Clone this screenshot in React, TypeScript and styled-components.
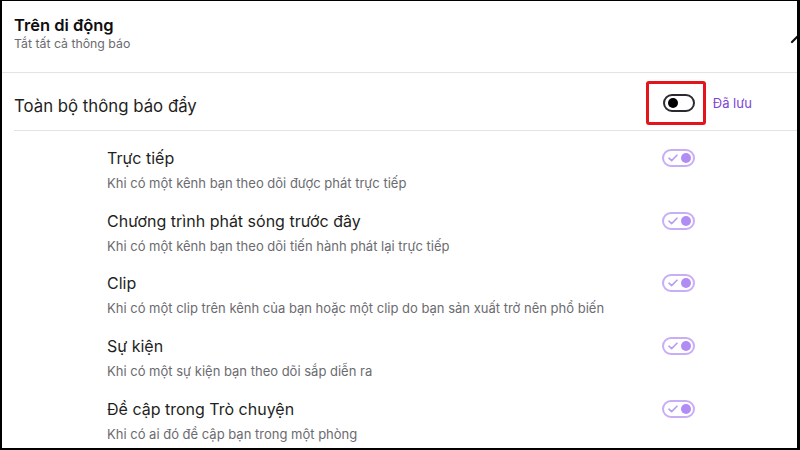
import styled, { createGlobalStyle } from "styled-components";

const GlobalStyle = createGlobalStyle`
  html, body {
    margin: 0;
    padding: 0;
    background: #ffffff;
  }
  body {
    font-family: Inter, "Noto Sans", "Liberation Sans", sans-serif;
    color: #1f1f23;
  }
`;

const Frame = styled.div`
  width: 800px;
  height: 450px;
  box-sizing: border-box;
  border: 2px solid #000;
  border-top-width: 1px;
  border-right-width: 3px;
  overflow: hidden;
  background: #fff;
`;

const Header = styled.header`
  display: flex;
  justify-content: space-between;
  align-items: flex-start;
  padding: 13px 0 0 12px;
  height: 72px;
  box-sizing: border-box;
  border-bottom: 1px solid #e3e3e6;
`;

const HeaderText = styled.div`
  display: flex;
  flex-direction: column;
`;

const Title = styled.h2`
  margin: 0;
  font-size: 16.5px;
  line-height: 22px;
  font-weight: 600;
  color: #0e0e10;
`;

const Subtitle = styled.p`
  margin: 0;
  font-size: 12.3px;
  line-height: 16px;
  color: #6b6b70;
`;

const Chevron = styled.svg`
  margin-top: 17px;
  margin-right: -14px;
  flex-shrink: 0;
`;

const MasterRow = styled.div`
  display: flex;
  align-items: center;
  height: 58px;
  margin-left: 12px;
  padding-top: 3px;
  box-sizing: border-box;
  border-bottom: 1px solid #e3e3e6;
`;

const MasterLabel = styled.span`
  flex: 1;
  font-size: 16.8px;
  line-height: 24px;
  color: #1f1f23;
  padding-top: 5px;
`;

const Highlight = styled.div`
  display: flex;
  align-items: center;
  justify-content: center;
  width: 60px;
  height: 44px;
  box-sizing: border-box;
  border: 3px solid #e3151a;
  border-radius: 3px;
  padding-left: 6px;
`;

const Saved = styled.span`
  font-size: 13px;
  line-height: 16px;
  color: #7b45d6;
  margin-left: 7px;
  margin-right: 45px;
`;

const Track = styled.span<{ $on?: boolean }>`
  position: relative;
  display: inline-block;
  flex-shrink: 0;
  box-sizing: border-box;
  width: ${(p) => (p.$on ? "33px" : "32px")};
  height: 18px;
  border-radius: 9px;
  border: 2px solid ${(p) => (p.$on ? "#c8adf7" : "#2b2b2f")};
  background: #fff;
`;

const Knob = styled.span<{ $on?: boolean }>`
  position: absolute;
  top: 2px;
  ${(p) => (p.$on ? "right: 2px;" : "left: 3px;")}
  width: 10px;
  height: 10px;
  border-radius: 50%;
  background: ${(p) => (p.$on ? "#b18cf5" : "#000")};
`;

const Check = styled.svg`
  position: absolute;
  left: 4px;
  top: 3px;
`;

const List = styled.div`
  display: flex;
  flex-direction: column;
  padding: 0 102px 0 105px;
`;

const Item = styled.div`
  height: 62.7px;
  box-sizing: border-box;
  padding-top: 17px;
`;

const ItemHead = styled.div`
  display: flex;
  align-items: center;
  justify-content: space-between;
  height: 20px;
`;

const ItemTitle = styled.span`
  font-size: 16px;
  line-height: 20px;
  color: #1f1f23;
`;

const ItemDesc = styled.p`
  margin: 7px 0 0;
  font-size: 13px;
  line-height: 16px;
  color: #6b6b70;
`;

const Toggle = ({ on }: { on?: boolean }) => (
  <Track $on={on}>
    {on && (
      <Check width="10" height="8" viewBox="0 0 10 8">
        <path
          d="M1 4.2 L3.6 6.6 L9 1.2"
          fill="none"
          stroke="#b99cf0"
          strokeWidth="1.6"
          strokeLinecap="round"
          strokeLinejoin="round"
        />
      </Check>
    )}
    <Knob $on={on} />
  </Track>
);

const items = [
  {
    title: "Trực tiếp",
    desc: "Khi có một kênh bạn theo dõi được phát trực tiếp",
  },
  {
    title: "Chương trình phát sóng trước đây",
    desc: "Khi có một kênh bạn theo dõi tiến hành phát lại trực tiếp",
  },
  {
    title: "Clip",
    desc: "Khi có một clip trên kênh của bạn hoặc một clip do bạn sản xuất trở nên phổ biến",
  },
  {
    title: "Sự kiện",
    desc: "Khi có một sự kiện bạn theo dõi sắp diễn ra",
  },
  {
    title: "Đề cập trong Trò chuyện",
    desc: "Khi có ai đó đề cập bạn trong một phòng",
  },
];

const App = () => {
  return (
    <>
      <GlobalStyle />
      <Frame>
        <Header>
          <HeaderText>
            <Title>Trên di động</Title>
            <Subtitle>Tắt tất cả thông báo</Subtitle>
          </HeaderText>
          <Chevron width="22" height="14" viewBox="0 0 22 14">
            <path
              d="M3 11 L11 3 L19 11"
              fill="none"
              stroke="#111"
              strokeWidth="2.2"
              strokeLinecap="round"
            />
          </Chevron>
        </Header>

        <MasterRow>
          <MasterLabel>Toàn bộ thông báo đẩy</MasterLabel>
          <Highlight>
            <Toggle />
          </Highlight>
          <Saved>Đã lưu</Saved>
        </MasterRow>

        <List>
          {items.map((it) => (
            <Item key={it.title}>
              <ItemHead>
                <ItemTitle>{it.title}</ItemTitle>
                <Toggle on />
              </ItemHead>
              <ItemDesc>{it.desc}</ItemDesc>
            </Item>
          ))}
        </List>
      </Frame>
    </>
  );
};

export default App;
